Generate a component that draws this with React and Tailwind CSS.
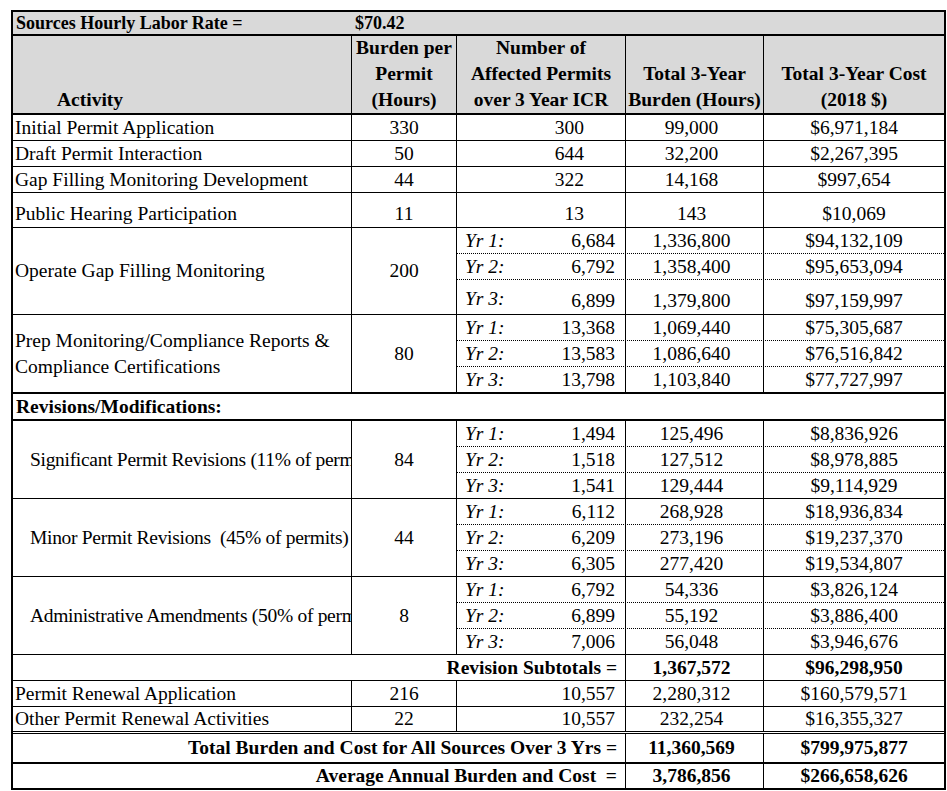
import React from "react";

const B = "border-black";

function Sub({ label, n, h, c, height, last, labelTop, n3pad = "pr-[10px]" }) {
  return (
    <div
      className={`flex ${height} ${last ? "" : "border-b border-dotted " + B}`}
    >
      <div className={`w-[169px] border-r ${B} flex justify-between pl-[8px] ${n3pad} ${labelTop ? "items-stretch" : "items-center"}`}>
        {labelTop ? (
          <>
            <span className="italic self-center pt-[3px]">{label}</span>
            <span className="self-end leading-[26px]">{n}</span>
          </>
        ) : (
          <>
            <span className="italic">{label}</span>
            <span>{n}</span>
          </>
        )}
      </div>
      <div className={`w-[138px] border-r ${B} flex ${labelTop ? "items-end" : "items-center"} justify-center pr-[6px] ${labelTop ? "leading-[26px]" : ""}`}>
        {h}
      </div>
      <div className={`flex-1 flex ${labelTop ? "items-end" : "items-center"} justify-center ${labelTop ? "leading-[26px]" : ""}`}>
        {c}
      </div>
    </div>
  );
}

function SimpleRow({ name, burden, n, h, c, height = "h-[26px]", align = "items-center", npad = "pr-[41px]" }) {
  return (
    <div className={`flex ${height} border-b ${B}`}>
      <div className={`w-[339px] border-r ${B} flex ${align} pl-[2px] whitespace-nowrap overflow-hidden leading-[26px]`}>{name}</div>
      <div className={`w-[105px] border-r ${B} flex ${align} justify-center leading-[26px]`}>{burden}</div>
      <div className={`w-[169px] border-r ${B} flex ${align} justify-end ${npad} leading-[26px]`}>{n}</div>
      <div className={`w-[138px] border-r ${B} flex ${align} justify-center pr-[6px] leading-[26px]`}>{h}</div>
      <div className={`flex-1 flex ${align} justify-center leading-[26px]`}>{c}</div>
    </div>
  );
}

function YearBlock({ name, burden, rows, height, bottom, indent, heights, labelTopLast, twoLine }) {
  return (
    <div className={`flex ${height} ${bottom} ${B}`}>
      <div className={`w-[339px] border-r ${B} flex items-center ${indent ? "pl-[17px]" : "pl-[2px]"} whitespace-nowrap overflow-hidden leading-[26px]`}>
        {twoLine ? (
          <div>
            <div>{twoLine[0]}</div>
            <div>{twoLine[1]}</div>
          </div>
        ) : (
          <span className={indent ? "whitespace-pre tracking-[-0.3px]" : ""}>{name}</span>
        )}
      </div>
      <div className={`w-[105px] border-r ${B} flex items-center justify-center`}>{burden}</div>
      <div className="flex-1 flex flex-col">
        {rows.map((r, i) => (
          <Sub
            key={i}
            label={`Yr ${i + 1}:`}
            n={r[0]}
            h={r[1]}
            c={r[2]}
            height={heights[i]}
            last={i === rows.length - 1}
            labelTop={labelTopLast && i === rows.length - 1}
          />
        ))}
      </div>
    </div>
  );
}

function TotalRow({ label, h, c, height, bottom }) {
  return (
    <div className={`flex ${height} ${bottom} ${B} font-bold`}>
      <div className={`w-[613px] border-r ${B} flex items-center justify-end pr-[8px] whitespace-pre leading-[26px]`}>{label}</div>
      <div className={`w-[138px] border-r ${B} flex items-center justify-center pr-[6px] leading-[26px]`}>{h}</div>
      <div className="flex-1 flex items-center justify-center leading-[26px]">{c}</div>
    </div>
  );
}

export default function App() {
  return (
    <div className="bg-white min-h-[791px] w-[947px] pt-[10px] pl-[11px] font-['Liberation_Serif',serif] text-black text-[19.5px]">
      <div className={`w-[935px] border-2 ${B}`}>
        {/* Title row */}
        <div className={`flex h-[24px] border-b-2 ${B} bg-[#d9d9d9] font-bold text-[18px]`}>
          <div className="w-[339px] pl-[3px] flex items-center">Sources Hourly Labor Rate =</div>
          <div className="pl-[3px] flex items-center">$70.42</div>
        </div>
        {/* Header */}
        <div className={`flex h-[79px] border-b-2 ${B} bg-[#d9d9d9] font-bold leading-[26px]`}>
          <div className={`w-[339px] border-r ${B} flex items-end pl-[44px]`}>Activity</div>
          <div className={`w-[105px] border-r ${B} flex flex-col justify-end items-center text-center`}>
            <div>Burden per</div>
            <div>Permit</div>
            <div>(Hours)</div>
          </div>
          <div className={`w-[169px] border-r ${B} flex flex-col justify-end items-center text-center whitespace-nowrap`}>
            <div>Number of</div>
            <div>Affected Permits</div>
            <div>over 3 Year ICR</div>
          </div>
          <div className={`w-[138px] border-r ${B} flex flex-col justify-end items-center text-center whitespace-nowrap`}>
            <div>Total 3-Year</div>
            <div>Burden (Hours)</div>
          </div>
          <div className="flex-1 flex flex-col justify-end items-center text-center whitespace-nowrap">
            <div>Total 3-Year Cost</div>
            <div>(2018 $)</div>
          </div>
        </div>

        <SimpleRow name="Initial Permit Application" burden="330" n="300" h="99,000" c="$6,971,184" />
        <SimpleRow name="Draft Permit Interaction" burden="50" n="644" h="32,200" c="$2,267,395" />
        <SimpleRow name="Gap Filling Monitoring Development" burden="44" n="322" h="14,168" c="$997,654" />
        <SimpleRow name="Public Hearing Participation" burden="11" n="13" h="143" c="$10,069" height="h-[35px]" align="items-end" />

        <YearBlock
          name="Operate Gap Filling Monitoring"
          burden="200"
          height="h-[87px]"
          bottom="border-b"
          heights={["h-[26px]", "h-[26px]", "h-[34px]"]}
          labelTopLast
          rows={[
            ["6,684", "1,336,800", "$94,132,109"],
            ["6,792", "1,358,400", "$95,653,094"],
            ["6,899", "1,379,800", "$97,159,997"],
          ]}
        />
        <YearBlock
          twoLine={["Prep Monitoring/Compliance Reports &", "Compliance Certifications"]}
          burden="80"
          height="h-[79px]"
          bottom="border-b-2"
          heights={["h-[26px]", "h-[26px]", "h-[25px]"]}
          rows={[
            ["13,368", "1,069,440", "$75,305,687"],
            ["13,583", "1,086,640", "$76,516,842"],
            ["13,798", "1,103,840", "$77,727,997"],
          ]}
        />

        <div className={`flex h-[27px] border-b-2 ${B} items-center pl-[3px] font-bold`}>
          Revisions/Modifications:
        </div>

        <YearBlock
          name="Significant Permit Revisions (11% of permits)"
          indent
          burden="84"
          height="h-[78px]"
          bottom="border-b"
          heights={["h-[26px]", "h-[26px]", "h-[25px]"]}
          rows={[
            ["1,494", "125,496", "$8,836,926"],
            ["1,518", "127,512", "$8,978,885"],
            ["1,541", "129,444", "$9,114,929"],
          ]}
        />
        <YearBlock
          name="Minor Permit Revisions  (45% of permits)"
          indent
          burden="44"
          height="h-[78px]"
          bottom="border-b"
          heights={["h-[26px]", "h-[26px]", "h-[25px]"]}
          rows={[
            ["6,112", "268,928", "$18,936,834"],
            ["6,209", "273,196", "$19,237,370"],
            ["6,305", "277,420", "$19,534,807"],
          ]}
        />
        <YearBlock
          name="Administrative Amendments (50% of permits)"
          indent
          burden="8"
          height="h-[78px]"
          bottom="border-b"
          heights={["h-[26px]", "h-[26px]", "h-[25px]"]}
          rows={[
            ["6,792", "54,336", "$3,826,124"],
            ["6,899", "55,192", "$3,886,400"],
            ["7,006", "56,048", "$3,946,676"],
          ]}
        />

        <TotalRow label="Revision Subtotals =" h="1,367,572" c="$96,298,950" height="h-[26px]" bottom="border-b" />

        <SimpleRow name="Permit Renewal Application" burden="216" n="10,557" h="2,280,312" c="$160,579,571" npad="pr-[10px]" />
        <div className={`flex h-[27px] border-b-[3px] border-double ${B}`}>
          <div className={`w-[339px] border-r ${B} flex items-center pl-[2px] leading-[26px]`}>Other Permit Renewal Activities</div>
          <div className={`w-[105px] border-r ${B} flex items-center justify-center leading-[26px]`}>22</div>
          <div className={`w-[169px] border-r ${B} flex items-center justify-end pr-[10px] leading-[26px]`}>10,557</div>
          <div className={`w-[138px] border-r ${B} flex items-center justify-center pr-[6px] leading-[26px]`}>232,254</div>
          <div className="flex-1 flex items-center justify-center leading-[26px]">$16,355,327</div>
        </div>

        <TotalRow label="Total Burden and Cost for All Sources Over 3 Yrs =" h="11,360,569" c="$799,975,877" height="h-[30px]" bottom="border-b-2" />
        <TotalRow label="Average Annual Burden and Cost  =" h="3,786,856" c="$266,658,626" height="h-[24px]" bottom="" />
      </div>
    </div>
  );
}
